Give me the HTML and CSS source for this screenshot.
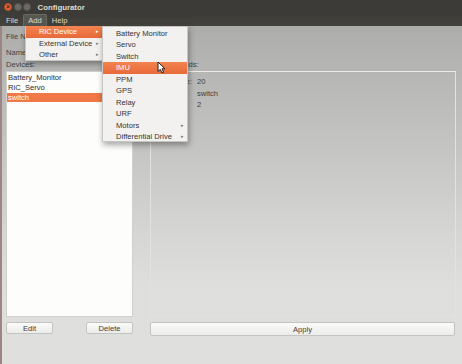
FILE: index.html
```html
<!DOCTYPE html>
<html>
<head>
  <title>Configurator</title>
  <link rel="stylesheet" href="styles.css">
</head>
<body>
  <div class="window">
    <div class="titlebar">
      <span class="wbtn close">×</span>
      <span class="wbtn"></span>
      <span class="wbtn"></span>
      <span class="title">Configurator</span>
    </div>
    <div class="menubar">
      <span class="mitem">File</span>
      <span class="mitem open">Add</span>
      <span class="mitem">Help</span>
    </div>

    <div class="content">
      <div class="left">
        <div class="label">File Name:</div>
        <div class="label">Name:</div>
        <div class="label">Devices:</div>
        <div class="list">
          <div class="row">Battery_Monitor</div>
          <div class="row">RiC_Servo</div>
          <div class="row selected">switch</div>
        </div>
        <div class="btnrow">
          <button class="btn small">Edit</button>
          <button class="btn small">Delete</button>
        </div>
      </div>
      <div class="right">
        <div class="label">Device Fields:</div>
        <div class="group">
          <div class="field"><span class="fkey">Size:</span><span>20</span></div>
          <div class="field"><span class="fkey">ID</span><span>switch</span></div>
          <div class="field"><span class="fkey">Pin</span><span>2</span></div>
        </div>
        <button class="btn wide">Apply</button>
      </div>
    </div>

    <!-- open menus lie over the window -->
    <div class="menu add-menu">
      <div class="item active">RiC Device<span class="arrow">▸</span></div>
      <div class="item">External Device<span class="arrow">▸</span></div>
      <div class="item">Other<span class="arrow">▸</span></div>
    </div>
    <div class="menu ric-menu">
      <div class="item">Battery Monitor</div>
      <div class="item">Servo</div>
      <div class="item">Switch</div>
      <div class="item active">IMU</div>
      <div class="item">PPM</div>
      <div class="item">GPS</div>
      <div class="item">Relay</div>
      <div class="item">URF</div>
      <div class="item">Motors<span class="arrow">▸</span></div>
      <div class="item">Differential Drive<span class="arrow">▸</span></div>
    </div>

    <svg class="cursor" width="9" height="13" viewBox="0 0 9 13">
      <path d="M1 1 L1 10.5 L3.3 8.4 L5 12 L6.6 11.3 L5 7.8 L8 7.8 Z" fill="#fff" stroke="#222" stroke-width="1"/>
    </svg>
  </div>
</body>
</html>
```

FILE: styles.css
```css
* {
  box-sizing: border-box;
}
body {
  margin: 0;
  background: #dfdfdd;
  font-family: "Liberation Sans", Arial, sans-serif;
  font-size: 7.6px;
  color: #333;
}
.window {
  position: relative;
  width: 462px;
  height: 364px;
  overflow: hidden;
  display: flex;
  flex-direction: column;
}
.titlebar {
  height: 14px;
  background: #3c3b37;
  display: flex;
  align-items: center;
  padding-left: 4px;
  gap: 1px;
}
.wbtn {
  width: 8px;
  height: 8px;
  border-radius: 50%;
  background: #6b6a64;
  border: 1px solid #55544f;
  margin-right: 0.5px;
}
.wbtn.close {
  background: #e2673c;
  border-color: #b4502e;
  color: #3c2a20;
  font-size: 7px;
  line-height: 6px;
  text-align: center;
  font-weight: bold;
}
.title {
  margin-left: 5px;
  color: #dfdbd2;
  font-weight: bold;
  font-size: 7.8px;
}
.menubar {
  height: 12px;
  background: linear-gradient(#3c3b37, #44433d);
  display: flex;
  align-items: stretch;
  padding-left: 1px;
  color: #dfdbd2;
}
.mitem {
  padding: 0 4px;
  display: flex;
  align-items: center;
  border: 1px solid transparent;
}
.mitem.open {
  background: #58574f;
  border-color: #6a6960;
  border-bottom: none;
  border-radius: 2px 2px 0 0;
}
.content {
  flex: 1;
  display: flex;
  gap: 17px;
  padding: 5px 6px 0 6px;
  border-left: 2px solid #9c8582;
  background: linear-gradient(#adadab 0px, #c2c2c0 110px, #d6d6d4 210px, #dededc 260px, #dfdfdd);
  color: #3f3f3f;
}
.left {
  width: 127px;
  margin-left: -2px;
  display: flex;
  flex-direction: column;
}
.label {
  height: 12px;
  line-height: 12px;
  white-space: nowrap;
}
.left .label:nth-child(2) {
  margin-top: 4px;
}
.list {
  height: 246px;
  background: #fdfdfc;
  border: 1px solid #d0d0ce;
  padding-top: 1px;
}
.row {
  height: 9.8px;
  line-height: 9.8px;
  padding-left: 1px;
  color: #2a2a2a;
}
.row.selected {
  background: #f07746;
  color: #fff;
}
.btnrow {
  display: flex;
  justify-content: space-between;
  margin-top: 5px;
}
.btn {
  font-family: inherit;
  font-size: 7.6px;
  color: #3c3c3c;
  height: 12px;
  padding: 0;
  border: 1px solid #c4c4c2;
  border-radius: 2px;
  background: linear-gradient(#fbfbfa, #ececea);
}
.btn.small {
  width: 47px;
}
.right {
  flex: 1;
  display: flex;
  flex-direction: column;
  padding-top: 28px;
}
.right .label {
  padding-left: 1px;
}
.group {
  height: 246px;
  border: 1px solid #e2e2e0;
  border-top-color: #ececea;
  padding: 4px 0 0 24px;
}
.field {
  display: flex;
  height: 11.5px;
  line-height: 11.5px;
}
.fkey {
  width: 22px;
}
.btn.wide {
  margin-top: 5px;
  height: 14px;
  width: 305px;
}
.menu {
  position: absolute;
  background: #f2f1f0;
  border: 1px solid #c8c6c2;
  box-shadow: 1px 3px 6px rgba(0, 0, 0, 0.35);
  color: #333;
}
.add-menu {
  left: 25px;
  top: 26px;
  width: 78px;
  height: 35px;
  border-top: none;
}
.ric-menu {
  left: 102px;
  top: 26px;
  width: 86px;
  height: 116px;
  padding-top: 0.5px;
}
.item {
  position: relative;
  height: 11.5px;
  line-height: 11.5px;
  padding-left: 13px;
  white-space: nowrap;
}
.item.active {
  background: linear-gradient(#f38450, #e8693a);
  color: #fff;
}
.arrow {
  position: absolute;
  right: 3px;
  top: 0;
  font-size: 5px;
  color: #777;
}
.item.active .arrow {
  color: #fff;
}
.cursor {
  position: absolute;
  left: 157px;
  top: 61px;
}
```
